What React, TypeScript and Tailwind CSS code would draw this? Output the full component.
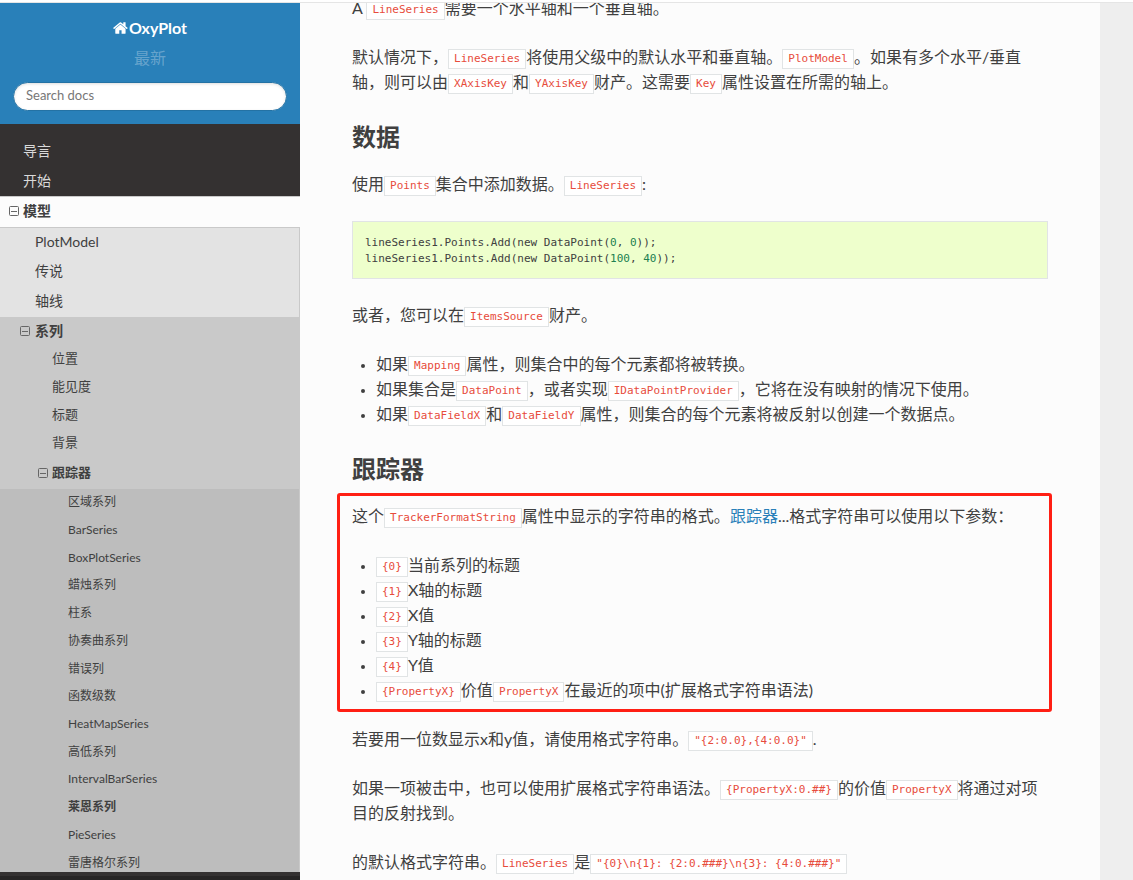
import type { ReactNode } from 'react';

const HOME_PATH =
  'M1408 992v480q0 26-19 45t-45 19h-384v-384h-256v384h-384q-26 0-45-19t-19-45v-480q0-1 .5-3t.5-3l575-474 575 474q1 2 1 6zm223-69l-62 74q-8 9-21 11h-3q-13 0-21-7l-692-577-692 577q-12 8-24 7-13-2-21-11l-62-74q-8-10-7-23.5t11-21.5l719-599q32-26 76-26t76 26l244 204v-195q0-14 9-23t23-9h192q14 0 23 9t9 23v408l219 182q10 8 11 21.5t-7 23.5z';

const MODEL_PAGES = ['PlotModel', '传说', '轴线'];

const SERIES_SECTIONS = ['位置', '能见度', '标题', '背景'];

const SERIES_PAGES = [
  '区域系列',
  'BarSeries',
  'BoxPlotSeries',
  '蜡烛系列',
  '柱系',
  '协奏曲系列',
  '错误列',
  '函数级数',
  'HeatMapSeries',
  '高低系列',
  'IntervalBarSeries',
  '莱恩系列',
  'PieSeries',
  '雷唐格尔系列',
];

const CURRENT_PAGE = '莱恩系列';

const FORMAT_ARGS = [
  { arg: '{0}', text: '当前系列的标题' },
  { arg: '{1}', text: 'X轴的标题' },
  { arg: '{2}', text: 'X值' },
  { arg: '{3}', text: 'Y轴的标题' },
  { arg: '{4}', text: 'Y值' },
];

function Code({ children }: { children: ReactNode }) {
  return (
    <code className="border border-[#e1e4e5] bg-white px-[5px] pt-[2px] pb-[3px] align-[1px] font-['DejaVu_Sans_Mono',monospace] text-[11px] leading-none whitespace-nowrap text-[#e74c3c]">
      {children}
    </code>
  );
}

function Num({ children }: { children: ReactNode }) {
  return <span className="text-[#208050]">{children}</span>;
}

function CollapseButton({ label }: { label: string }) {
  return (
    <button type="button" aria-label={label} className="shrink-0">
      <svg className="block h-[10px] w-[10px]" viewBox="0 0 10 10" fill="none" stroke="#666666">
        <rect x="0.5" y="0.5" width="9" height="9" rx="1" />
        <path d="M2 5.5h6" />
      </svg>
    </button>
  );
}

function SideNav() {
  return (
    <nav className="min-h-0 flex-1 overflow-hidden pt-3 text-sm text-[#404040]">
      <a href="#" className="flex h-[30px] items-center pb-px pl-[23px] text-[#d9d9d9]">
        导言
      </a>
      <a href="#" className="flex h-[30px] items-center pb-px pl-[23px] text-[#d9d9d9]">
        开始
      </a>
      <div className="flex h-8 items-center gap-1 border-y border-[#c9c9c9] bg-[#fcfcfc] pb-[2px] pl-[9px]">
        <CollapseButton label="模型" />
        <a href="#" className="font-bold">
          模型
        </a>
      </div>

      <div className="border-r border-[#c9c9c9] bg-[#e3e3e3]">
        <ul className="grid h-[89px] auto-rows-fr">
          {MODEL_PAGES.map((page) => (
            <li key={page} className="flex items-center pb-[2px] pl-[35px]">
              <a href="#">{page}</a>
            </li>
          ))}
        </ul>

        <div className="bg-[#c9c9c9]">
          <div className="flex h-7 items-center gap-[5px] pl-5">
            <CollapseButton label="系列" />
            <a href="#" className="font-bold">
              系列
            </a>
          </div>
          {SERIES_SECTIONS.map((section) => (
            <a key={section} href="#" className="flex h-7 items-center pb-px pl-[52px] text-[13px]">
              {section}
            </a>
          ))}
          <div className="flex h-8 items-center gap-1 pb-px pl-[38px]">
            <CollapseButton label="跟踪器" />
            <a href="#" className="text-[13px] font-bold">
              跟踪器
            </a>
          </div>
        </div>

        <ul className="grid h-[388px] auto-rows-fr bg-[#bdbdbd] text-xs">
          {SERIES_PAGES.map((page) => (
            <li key={page} className="flex items-center pb-px pl-[68px]">
              <a href="#" className={page === CURRENT_PAGE ? 'font-bold' : ''}>
                {page}
              </a>
            </li>
          ))}
        </ul>
      </div>
    </nav>
  );
}

function Sidebar() {
  return (
    <aside className="flex w-[300px] shrink-0 flex-col bg-[#343131]">
      <div className="flex h-[121px] flex-col items-center bg-[#2980b9] px-[13px] pt-[13px]">
        <a href="#" className="flex items-center text-base leading-6 font-bold text-white">
          <svg className="h-4 w-4" viewBox="0 0 1792 1792" fill="currentColor">
            <path d={HOME_PATH} />
          </svg>
          OxyPlot
        </a>
        <div className="mt-[6px] text-base leading-6 text-white/30">最新</div>
        <input
          type="text"
          aria-label="Search docs"
          placeholder="Search docs"
          className="mt-3 h-[29px] w-full shrink-0 rounded-full border border-[#2472a4] bg-white px-3 pb-1 text-[13px] shadow-[inset_0_1px_3px_#dddddd] placeholder:text-[#777777]"
        />
      </div>
      <SideNav />
      <div className="h-2 shrink-0 border-t-4 border-[#343131] bg-[#272525]" />
    </aside>
  );
}

function Article() {
  return (
    <article className="-mt-2 px-[52px] text-base leading-[25px] text-[#404040]">
      <p className="mb-6">
        A <Code>LineSeries</Code>需要一个水平轴和一个垂直轴。
      </p>
      <p className="mb-6">
        默认情况下，<Code>LineSeries</Code>将使用父级中的默认水平和垂直轴。<Code>PlotModel</Code>
        。如果有多个水平/垂直轴，则可以由<Code>XAxisKey</Code>和<Code>YAxisKey</Code>
        财产。这需要<Code>Key</Code>属性设置在所需的轴上。
      </p>

      <h2 className="mb-5 pt-1 text-2xl leading-[29px] font-bold">数据</h2>
      <p className="mb-6">
        使用<Code>Points</Code>集合中添加数据。<Code>LineSeries</Code>:
      </p>
      <pre className="mt-[25px] mb-[23px] border border-[#e1e4e5] bg-[#eeffcc] px-3 pt-[13px] pb-[11px] font-['DejaVu_Sans_Mono',monospace] text-[11px] leading-4">
        lineSeries1.Points.Add(new DataPoint(<Num>0</Num>, <Num>0</Num>));{'\n'}
        lineSeries1.Points.Add(new DataPoint(<Num>100</Num>, <Num>40</Num>));
      </pre>
      <p className="mb-6">
        或者，您可以在<Code>ItemsSource</Code>财产。
      </p>
      <ul className="mb-6 ml-6 list-disc marker:text-xs">
        <li>
          如果<Code>Mapping</Code>属性，则集合中的每个元素都将被转换。
        </li>
        <li>
          如果集合是<Code>DataPoint</Code>，或者实现<Code>IDataPointProvider</Code>
          ，它将在没有映射的情况下使用。
        </li>
        <li>
          如果<Code>DataFieldX</Code>和<Code>DataFieldY</Code>
          属性，则集合的每个元素将被反射以创建一个数据点。
        </li>
      </ul>

      <h2 className="mb-5 pt-1 text-2xl leading-[29px] font-bold">跟踪器</h2>
      <div className="relative mb-6">
        {/* highlight frame around the format string section */}
        <div className="pointer-events-none absolute -top-[10px] -right-1 -bottom-[10px] -left-[15px] rounded-[3px] border-3 border-[#ff1f14]" />
        <p className="mb-6">
          这个<Code>TrackerFormatString</Code>属性中显示的字符串的格式。
          <a href="#" className="text-[#2980b9]">
            跟踪器
          </a>
          ...格式字符串可以使用以下参数：
        </p>
        <ul className="ml-6 list-disc marker:text-xs">
          {FORMAT_ARGS.map(({ arg, text }) => (
            <li key={arg}>
              <Code>{arg}</Code>
              {text}
            </li>
          ))}
          <li>
            <Code>{'{PropertyX}'}</Code>价值<Code>PropertyX</Code>在最近的项中(扩展格式字符串语法)
          </li>
        </ul>
      </div>

      <p className="mb-6">
        若要用一位数显示x和y值，请使用格式字符串。<Code>{'"{2:0.0},{4:0.0}"'}</Code>.
      </p>
      <p className="mb-6">
        如果一项被击中，也可以使用扩展格式字符串语法。<Code>{'{PropertyX:0.##}'}</Code>的价值
        <Code>PropertyX</Code>将通过对项目的反射找到。
      </p>
      <p className="mb-6">
        的默认格式字符串。<Code>LineSeries</Code>是
        <Code>{'"{0}\\n{1}: {2:0.###}\\n{3}: {4:0.###}"'}</Code>
      </p>
    </article>
  );
}

export default function App() {
  return (
    <div
      lang="zh-CN"
      className="flex h-screen flex-col overflow-hidden bg-white font-['Lato','Noto_Sans_CJK_SC',sans-serif]"
    >
      <div className="h-[3px] shrink-0 border-b border-[#e5e5e5]" />
      <div className="flex min-h-0 flex-1">
        <Sidebar />
        <div className="min-w-0 flex-1 overflow-hidden bg-[#eeeeee]">
          <main className="h-full max-w-[800px] overflow-hidden bg-[#fcfcfc]">
            <Article />
          </main>
        </div>
      </div>
    </div>
  );
}
